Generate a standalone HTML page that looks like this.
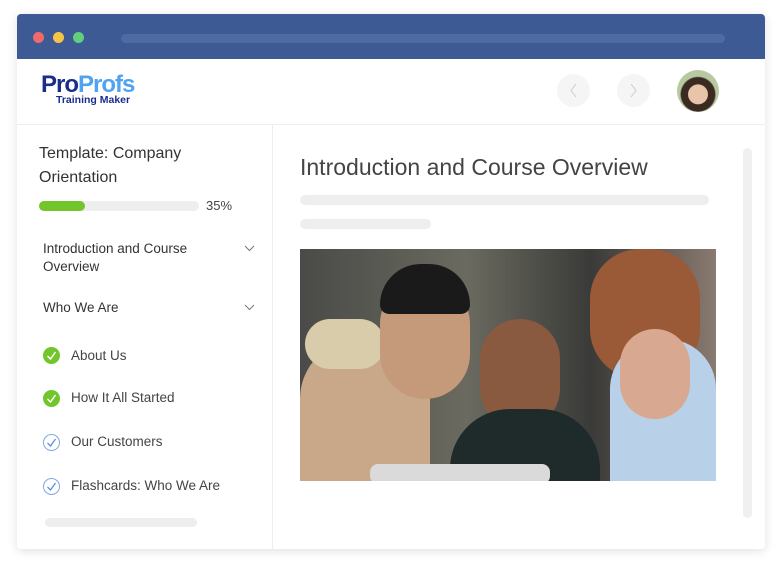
<!DOCTYPE html><html><head><style>
*{margin:0;padding:0;box-sizing:border-box}
body{width:782px;height:568px;background:#fff;font-family:"Liberation Sans",sans-serif;position:relative;overflow:hidden}
.card{position:absolute;left:17px;top:14px;width:748px;height:535px;background:#fff;box-shadow:0 2px 10px rgba(0,0,0,.12);border-radius:4px;overflow:hidden}
.bar{height:45px;background:#3d5a94;position:relative}
.dot{position:absolute;top:18px;width:11px;height:11px;border-radius:50%}
.url{position:absolute;left:104px;top:20px;width:604px;height:9px;border-radius:5px;background:#4f6ba3}
.a{position:absolute}
.t{color:#444;position:absolute}
.chk{position:absolute;left:43px;width:17px;height:17px;border-radius:50%}
.g{background:#72c52a}
.o{border:1px solid #7fa8e6}
.chk svg{position:absolute;left:3px;top:3px}
.line{position:absolute;background:#eee;border-radius:5px}
</style></head><body>
<div class="card">
<div class="bar">
<div class="dot" style="left:16px;background:#f06a6a"></div>
<div class="dot" style="left:36px;background:#f5c548"></div>
<div class="dot" style="left:56px;background:#62cf7f"></div>
<div class="url"></div>
</div>
<div class="a" style="left:24px;top:59px;font-weight:bold;font-size:24px;letter-spacing:-1px;line-height:1"><span style="color:#1a2d8c">Pro</span><span style="color:#4fa3f0">Profs</span></div>
<div class="a" style="left:39px;top:80px;font-weight:bold;font-size:10.5px;color:#1a2d8c">Training Maker</div>
<div class="a" style="left:540px;top:60px;width:33px;height:33px;border-radius:50%;background:#f5f5f5"><svg width="33" height="33"><path d="M19 10l-5 6.5 5 6.5" stroke="#ccc" fill="none"/></svg></div>
<div class="a" style="left:600px;top:60px;width:33px;height:33px;border-radius:50%;background:#f5f5f5"><svg width="33" height="33"><path d="M14 10l5 6.5-5 6.5" stroke="#ccc" fill="none"/></svg></div>
<div class="a" style="left:660px;top:56px;width:42px;height:42px;border-radius:50%;background:radial-gradient(circle at 50% 58%,#e8c4a8 0 30%,#3a2a22 32% 52%,#b8c8a0 56%)"></div>
<div class="a" style="left:0;top:110px;width:748px;height:1px;background:#eee"></div>
<div class="a" style="left:255px;top:111px;width:1px;height:424px;background:#eee"></div>
</div>
<div class="t" style="left:39px;top:142px;font-size:16px;line-height:24px;color:#333">Template: Company<br>Orientation</div>
<div class="line" style="left:39px;top:201px;width:160px;height:10px"></div>
<div class="a" style="left:39px;top:201px;width:46px;height:10px;border-radius:5px;background:#72c52a"></div>
<div class="t" style="left:206px;top:198px;font-size:13px">35%</div>
<div class="t" style="left:43px;top:240px;font-size:13.5px;line-height:18px;color:#333">Introduction and Course<br>Overview</div>
<svg class="a" style="left:244px;top:245px" width="11" height="7"><path d="M1 1l4.5 4.5L10 1" stroke="#777" fill="none"/></svg>
<div class="t" style="left:43px;top:300px;font-size:13.5px;color:#333">Who We Are</div>
<svg class="a" style="left:244px;top:304px" width="11" height="7"><path d="M1 1l4.5 4.5L10 1" stroke="#777" fill="none"/></svg>
<div class="chk g" style="top:347px"><svg width="11" height="11"><path d="M1.5 6l3 3 5-7" stroke="#fff" stroke-width="1.5" fill="none"/></svg></div>
<div class="t" style="left:71px;top:348px;font-size:13.5px">About Us</div>
<div class="chk g" style="top:390px"><svg width="11" height="11"><path d="M1.5 6l3 3 5-7" stroke="#fff" stroke-width="1.5" fill="none"/></svg></div>
<div class="t" style="left:71px;top:390px;font-size:13.5px">How It All Started</div>
<div class="chk o" style="top:434px"><svg width="11" height="11" style="left:2px;top:2px"><path d="M1.5 6l3 3 5-7" stroke="#5b8fe0" stroke-width="1.3" fill="none"/></svg></div>
<div class="t" style="left:71px;top:434px;font-size:13.5px">Our Customers</div>
<div class="chk o" style="top:478px"><svg width="11" height="11" style="left:2px;top:2px"><path d="M1.5 6l3 3 5-7" stroke="#5b8fe0" stroke-width="1.3" fill="none"/></svg></div>
<div class="t" style="left:71px;top:478px;font-size:13.5px">Flashcards: Who We Are</div>
<div class="line" style="left:45px;top:518px;width:152px;height:9px"></div>
<div class="t" style="left:300px;top:154px;font-size:23px;color:#444">Introduction and Course Overview</div>
<div class="line" style="left:300px;top:195px;width:409px;height:10px"></div>
<div class="line" style="left:300px;top:219px;width:131px;height:10px"></div>
<div class="a" style="left:743px;top:148px;width:9px;height:370px;border-radius:5px;background:#f0f0f0"></div>
<div class="a" style="left:300px;top:249px;width:416px;height:232px;overflow:hidden;background:linear-gradient(90deg,#4a4a48,#6a6a60 40%,#3a3a38 70%,#8a7a70)">
<div class="a" style="left:0;top:90px;width:130px;height:150px;border-radius:60px 60px 0 0;background:#c8a888"></div>
<div class="a" style="left:5px;top:70px;width:80px;height:50px;border-radius:40px;background:#d8ccaa"></div>
<div class="a" style="left:80px;top:30px;width:90px;height:120px;border-radius:45px;background:#c49a7a"></div>
<div class="a" style="left:80px;top:15px;width:90px;height:50px;border-radius:45px 45px 10px 10px;background:#1a1a1a"></div>
<div class="a" style="left:180px;top:70px;width:80px;height:110px;border-radius:40px;background:#8a5a40"></div>
<div class="a" style="left:150px;top:160px;width:150px;height:80px;border-radius:60px 60px 0 0;background:#1f2a2a"></div>
<div class="a" style="left:290px;top:0;width:110px;height:130px;border-radius:50px;background:#9a5a38"></div>
<div class="a" style="left:310px;top:90px;width:106px;height:150px;border-radius:50px 50px 0 0;background:#b8d0e8"></div>
<div class="a" style="left:320px;top:80px;width:70px;height:90px;border-radius:35px;background:#d8a890"></div>
<div class="a" style="left:70px;top:215px;width:180px;height:20px;border-radius:8px;background:#dadada"></div>
</div>
</body></html>
